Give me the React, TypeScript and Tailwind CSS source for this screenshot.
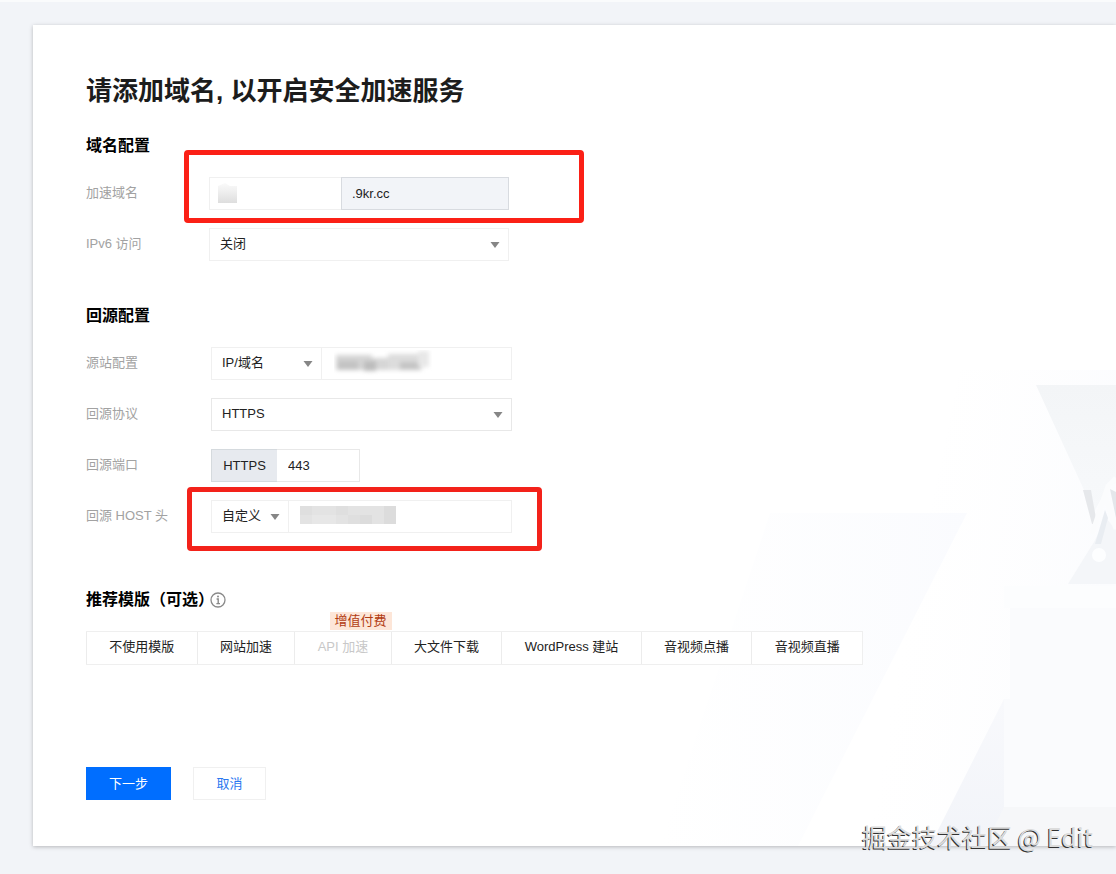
import type { ReactNode } from "react";

function Caret() {
  return (
    <svg viewBox="0 0 10 6" className="pointer-events-none absolute right-2 top-[13px] h-[6px] w-[10px]" aria-hidden="true">
      <path d="M0.5 0H9.5L5 6Z" fill="#868686" />
    </svg>
  );
}

function SelectBox({ id, label, value, className }: { id?: string; label?: string; value: string; className: string }) {
  return (
    <div className={`relative ${className}`}>
      <select id={id} aria-label={label} className="h-full w-full appearance-none bg-white pb-[2px] pl-[10px] pr-6 text-[13px] text-[#222] outline-none">
        <option>{value}</option>
      </select>
      <Caret />
    </div>
  );
}

function Row({ label, htmlFor, cols, children }: { label: string; htmlFor: string; cols: string; children: ReactNode }) {
  return (
    <div className={`grid h-[33px] items-center ${cols}`}>
      <label htmlFor={htmlFor} className="pb-[2px] text-[#a2a2a2]">{label}</label>
      <div className="relative flex h-[33px]">{children}</div>
    </div>
  );
}

function Heading({ children }: { children: ReactNode }) {
  return <h2 className="flex items-center text-[16px] font-bold leading-6 text-black">{children}</h2>;
}

const domainCols = "grid-cols-[123px_300px]";
const originCols = "grid-cols-[125px_301px]";

const templates = [
  { name: "不使用模版" },
  { name: "网站加速" },
  { name: "API 加速", paid: true },
  { name: "大文件下载" },
  { name: "WordPress 建站" },
  { name: "音视频点播" },
  { name: "音视频直播" },
];

function Backdrop() {
  return (
    <svg viewBox="0 0 456 476" className="pointer-events-none absolute bottom-0 right-0 h-[476px] w-[456px]" aria-hidden="true">
      <defs>
        <linearGradient id="beam" x1="0" y1="0" x2="1" y2="0">
          <stop offset="0" stopColor="#fbfcfe" stopOpacity="0" />
          <stop offset="1" stopColor="#fafbfe" />
        </linearGradient>
        <linearGradient id="side" x1="0" y1="0" x2="1" y2="0.3">
          <stop offset="0.3" stopColor="#fdfdfe" stopOpacity="0" />
          <stop offset="1" stopColor="#fbfcfe" />
        </linearGradient>
        <linearGradient id="funnel" x1="0" y1="0" x2="0" y2="1">
          <stop offset="0" stopColor="#f3f5f7" />
          <stop offset="1" stopColor="#f7f9fb" />
        </linearGradient>
        <linearGradient id="slope" x1="0" y1="0" x2="0" y2="1">
          <stop offset="0" stopColor="#f8f9fc" />
          <stop offset="1" stopColor="#f2f4f9" />
        </linearGradient>
      </defs>
      <path d="M300 0H456V476H200Z" fill="url(#side)" />
      <path d="M110 143H307L138 476H0Z" fill="url(#beam)" />
      <path d="M376 15H456V112L446 120L434 142L424 120Z" fill="url(#funnel)" />
      <path d="M434 172L408 214H456V160L446 148Z" fill="#f4f6f9" />
      <path d="M423 120H431L437 154L432 154Z" fill="#e6e8eb" />
      <path d="M445 140L448 148L441 174H435Z" fill="#e9edf2" />
      <path d="M450 119L456 122V148Z" fill="#e4e7eb" />
      <path d="M456 108L448 116L432 164" fill="none" stroke="#fbfcfd" strokeWidth="5" />
      <path d="M445 126L456 159" stroke="#fbfcfd" strokeWidth="5" />
      <circle cx="439" cy="185" r="7" fill="#fdfeff" />
      <path d="M344 216H456V238H344Z" fill="#fcfdfe" />
      <path d="M350 238H456V437H350Z" fill="#fafbfd" />
      <path d="M344 329V437H456V476H270Z" fill="url(#slope)" />
      <path d="M344 329H350V437H344Z" fill="#fafbfd" />
      <path d="M350 330H456V437H350Z" fill="#fafbfd" />
      <path d="M344 437H456V476H325Z" fill="#f6f7f9" />
    </svg>
  );
}

export default function App() {
  return (
    <main className="relative min-h-screen overflow-hidden border-t-2 border-[#fafbfc] bg-[#f2f4f8] pb-7 pl-[33px] pt-[23px] font-['Liberation_Sans','Noto_Sans_CJK_SC',sans-serif] text-[13px] leading-5 text-[#222]">
      <form className="relative bg-white pb-[46px] pl-[53px] pt-12 shadow-[0_1px_4px_rgba(0,0,0,0.25)]" onSubmit={(e) => e.preventDefault()}>
        <Backdrop />
        <div className="relative">
          <h1 className="text-[26px] font-bold leading-9 text-[#1c1c1c]">请添加域名, 以开启安全加速服务</h1>

          <section className="mt-[25px]">
            <Heading>域名配置</Heading>
            <div className="mt-[19px] flex flex-col gap-[18px]">
              <Row label="加速域名" htmlFor="domain" cols={domainCols}>
                <div className="relative w-[132px]">
                  <input id="domain" className="h-full w-full border border-r-0 border-[#f0f0f0] bg-white px-[11px] outline-none" />
                  <svg viewBox="0 0 19 20" className="pointer-events-none absolute left-[9px] top-[6px] h-5 w-[19px]" aria-hidden="true">
                    <defs>
                      <linearGradient id="mask" x1="0" y1="0" x2="0" y2="1">
                        <stop offset="0" stopColor="#fafafa" />
                        <stop offset="0.5" stopColor="#ededed" />
                        <stop offset="1" stopColor="#dedede" />
                      </linearGradient>
                    </defs>
                    <path d="M0 3L7 0L12 3H19V20H0Z" fill="url(#mask)" />
                  </svg>
                </div>
                <div className="flex flex-1 items-center border border-[#d8dbe0] bg-[#f2f4f8] px-[10px]">.9kr.cc</div>
                <div className="pointer-events-none absolute -left-[25px] -top-[27px] h-[73px] w-[400px] rounded-[4px] border-[5px] border-[#fb2016]" />
              </Row>
              <Row label="IPv6 访问" htmlFor="ipv6" cols={domainCols}>
                <SelectBox id="ipv6" value="关闭" className="w-full border border-[#f0f0f0]" />
              </Row>
            </div>
          </section>

          <section className="mt-[43px]">
            <Heading>回源配置</Heading>
            <div className="mt-[19px] flex flex-col gap-[18px]">
              <Row label="源站配置" htmlFor="origin" cols={originCols}>
                <SelectBox label="源站类型" value="IP/域名" className="w-[111px] border border-[#f0f0f0]" />
                <div className="relative flex-1">
                  <input id="origin" className="h-full w-full border border-l-0 border-[#f0f0f0] bg-white px-[11px] outline-none" />
                  <svg viewBox="0 0 98 26" className="pointer-events-none absolute left-[12px] top-[3px] h-[26px] w-[98px]" aria-hidden="true">
                    <g className="blur-[2px]">
                      <path d="M2 5H38V20H2Z" fill="#d4d4d4" />
                      <path d="M30 8H62V20H30Z" fill="#d6d6d6" />
                      <path d="M54 4H88V20H54Z" fill="#dcdcdc" />
                      <path d="M4 11H24V20H4Z" fill="#c3c3c3" />
                      <path d="M30 11H42V21H30Z" fill="#bdbdbd" />
                      <path d="M66 12H86V20H66Z" fill="#c4c4c4" />
                      <path d="M84 1H95V17H84Z" fill="#e8e8e8" />
                    </g>
                  </svg>
                </div>
              </Row>
              <Row label="回源协议" htmlFor="protocol" cols={originCols}>
                <SelectBox id="protocol" value="HTTPS" className="w-full border border-[#e8e8e8]" />
              </Row>
              <Row label="回源端口" htmlFor="port" cols={originCols}>
                <div className="flex w-[66px] items-center justify-center border border-r-0 border-[#d5dade] bg-[#e7eaef]">HTTPS</div>
                <input id="port" defaultValue="443" className="w-[83px] border border-l-0 border-[#e8e8e8] bg-white px-[11px] outline-none" />
              </Row>
              <Row label="回源 HOST 头" htmlFor="host" cols={originCols}>
                <SelectBox label="HOST 头类型" value="自定义" className="w-[78px] border border-[#f0f0f0]" />
                <div className="relative flex-1">
                  <input id="host" className="h-full w-full border border-l-0 border-[#f0f0f0] bg-white px-[11px] outline-none" />
                  <svg viewBox="0 0 96 18" className="pointer-events-none absolute left-[11px] top-[6px] h-[18px] w-[96px]" aria-hidden="true">
                    <path d="M0 0H96V18H0Z" fill="#e3e3e3" />
                    <path d="M0 0H12V9H0ZM48 9H60V18H48ZM36 0H48V9H36Z" fill="#dfdfdf" />
                    <path d="M12 9H36V18H12Z" fill="#e7e7e7" />
                    <path d="M60 9H72V18H60ZM84 0H96V18H84Z" fill="#dcdcdc" />
                  </svg>
                </div>
                <div className="pointer-events-none absolute -left-[24px] -top-[13px] h-[64px] w-[355px] rounded-[4px] border-[5px] border-[#f3221a]" />
              </Row>
            </div>
          </section>

          <section className="mt-[55px]">
            <Heading>
              推荐模版（可选）
              <svg viewBox="0 0 16 16" className="-ml-1 h-4 w-4" fill="none" stroke="#8a8a8a" aria-hidden="true">
                <circle cx="8" cy="8" r="7" strokeWidth="1.3" />
                <path d="M6.6 7H8.2V11.5M6.4 11.6H10" strokeWidth="1.4" />
                <circle cx="8" cy="4.6" r="1" fill="#8a8a8a" stroke="none" />
              </svg>
            </Heading>
            <div className="mt-[19px] flex h-[34px] w-[777px] border border-l-0 border-[#efefef] bg-white">
              {templates.map((t) => (
                <button
                  key={t.name}
                  type="button"
                  disabled={t.paid}
                  className={`relative flex-auto whitespace-nowrap border-l border-[#ececec] px-5 pb-[2px] ${t.paid ? "text-[#c8c8c8]" : "text-[#222]"}`}
                >
                  {t.name}
                  {t.paid && (
                    <span className="absolute -right-px -top-[20px] whitespace-nowrap bg-[#fde6d8] px-[5px] leading-[18px] text-[#b23c12]">增值付费</span>
                  )}
                </button>
              ))}
            </div>
          </section>

          <div className="mt-[102px] flex gap-[22px]">
            <button type="submit" className="h-[33px] w-[85px] bg-[#006eff] text-white">下一步</button>
            <button type="button" className="h-[33px] w-[73px] border border-[#f0f0f0] bg-white text-[#2a78f0]">取消</button>
          </div>
        </div>
      </form>
      <div className="absolute bottom-[20px] right-[23px] whitespace-nowrap font-['Noto_Sans_CJK_SC',sans-serif] text-[25px] leading-9 text-[#dcdcdc] [text-shadow:-1px_1px_0_#333]">
        掘金技术社区 @ Edit
      </div>
    </main>
  );
}
